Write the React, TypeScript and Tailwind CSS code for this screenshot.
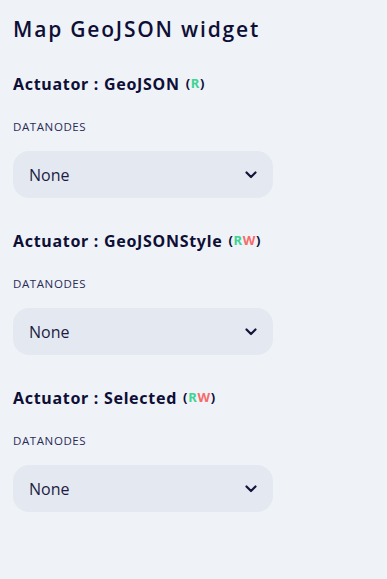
import React from "react";

function Chevron() {
  return (
    <svg width="12" height="8" viewBox="0 0 12 8" fill="none">
      <path d="M1.5 1.5 L6 6 L10.5 1.5" stroke="#14143c" strokeWidth="2.2" strokeLinecap="round" strokeLinejoin="round" />
    </svg>
  );
}

function Block({ name, rw }: { name: string; rw: boolean }) {
  return (
    <div className="flex flex-col">
      <div className="h-[20px] flex items-center text-[16px] font-bold tracking-[0.7px] text-[#0e0e36]" style={{ fontFamily: '"Noto Sans", sans-serif' }}>
        <span>Actuator : {name}</span>
        <span className="ml-[6px] text-[13px] font-bold">
          (<span className="text-[#3fd394]">R</span>
          {rw && <span className="text-[#f76a6a]">W</span>})
        </span>
      </div>
      <div className="mt-[26px] h-[14px] flex items-center text-[11.5px] font-normal tracking-[0.6px] text-[#2a2a58] uppercase" style={{ fontFamily: '"Open Sans", sans-serif' }}>
        Datanodes
      </div>
      <div className="mt-[17px] w-[260px] h-[47px] rounded-[16px] bg-[#e4e8f0] flex items-center justify-between pl-[16px] pr-[16px]">
        <span className="text-[16px] text-[#1c1c44]" style={{ fontFamily: '"Open Sans", sans-serif' }}>None</span>
        <Chevron />
      </div>
    </div>
  );
}

export default function App() {
  return (
    <div className="w-[387px] h-[579px] bg-[#eff3f7] pl-[13px] pt-[17px]">
      <div className="h-[26px] flex items-center text-[21px] font-semibold tracking-[1.8px] text-[#0e0e36]" style={{ fontFamily: '"Open Sans", sans-serif' }}>
        Map GeoJSON widget
      </div>
      <div className="mt-[31px] flex flex-col gap-[33px]">
        <Block name="GeoJSON" rw={false} />
        <Block name="GeoJSONStyle" rw={true} />
        <Block name="Selected" rw={true} />
      </div>
    </div>
  );
}
